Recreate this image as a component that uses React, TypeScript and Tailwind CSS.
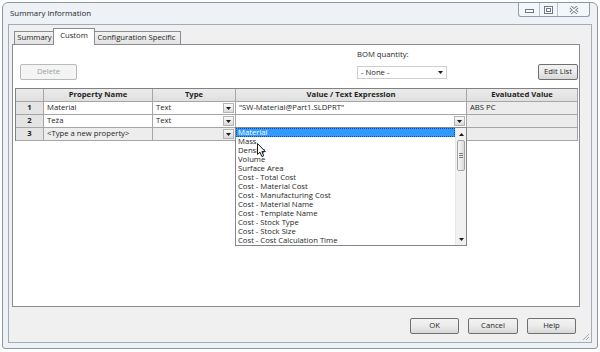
import React from "react";

const LIST_ITEMS = [
  "Material",
  "Mass",
  "Density",
  "Volume",
  "Surface Area",
  "Cost - Total Cost",
  "Cost - Material Cost",
  "Cost - Manufacturing Cost",
  "Cost - Material Name",
  "Cost - Template Name",
  "Cost - Stock Type",
  "Cost - Stock Size",
  "Cost - Cost Calculation Time",
];

function Tri({ up = false }: { up?: boolean }) {
  return (
    <svg width="5" height="3" viewBox="0 0 5 3">
      <path d={up ? "M0 3H5L2.5 0Z" : "M0 0H5L2.5 3Z"} fill="#1a1a1a" />
    </svg>
  );
}

function CellArrow() {
  return (
    <div className="ml-auto mr-px w-[11px] h-[10px] border border-[#b4b4b4] bg-linear-to-b from-[#fbfbfb] to-[#dadada] flex items-center justify-center">
      <Tri />
    </div>
  );
}

function Btn({ children, className = "", disabled = false }: { children: React.ReactNode; className?: string; disabled?: boolean }) {
  return (
    <button
      type="button"
      className={`h-[16px] rounded-[2px] border flex items-center justify-center ${
        disabled
          ? "border-[#b7bbbe] bg-[#f4f4f4] text-[#9c9c9c]"
          : "border-[#707070] bg-linear-to-b from-[#f3f3f3] via-[#ebebeb] to-[#d8d8d8] text-[#1e1e1e]"
      } ${className}`}
    >
      {children}
    </button>
  );
}

function CaptionButtons() {
  return (
    <div className="ml-auto mr-[7px] h-[14px] flex border border-t-0 border-[#8f9cab] rounded-b-[3px] bg-[#f4f7fa]">
      <div className="w-[21px] flex items-center justify-center border-r border-[#b6c0cb]">
        <svg width="9" height="6" viewBox="0 0 9 6">
          <rect x="0.5" y="2.5" width="8" height="3" fill="#fff" stroke="#6d7886" />
        </svg>
      </div>
      <div className="w-[18px] flex items-center justify-center border-r border-[#b6c0cb]">
        <svg width="9" height="8" viewBox="0 0 9 8">
          <rect x="0.5" y="0.5" width="8" height="7" fill="#fff" stroke="#6d7886" />
          <rect x="2.5" y="2.5" width="4" height="3" fill="none" stroke="#6d7886" />
        </svg>
      </div>
      <div className="w-[31px] flex items-center justify-center">
        <svg width="10" height="8" viewBox="0 0 10 8">
          <path d="M1.5 1L8.5 7M8.5 1L1.5 7" stroke="#6d7886" strokeWidth="3" />
          <path d="M1.5 1L8.5 7M8.5 1L1.5 7" stroke="#fff" strokeWidth="1.4" />
        </svg>
      </div>
    </div>
  );
}

function DropList() {
  return (
    <div className="absolute left-[219px] top-[38px] w-[232px] h-[119px] border border-[#828790] bg-white flex z-20">
      <div className="relative w-[219px] flex flex-col">
        {LIST_ITEMS.map((item, i) => (
          <div
            key={item}
            className={`h-[9px] leading-[9px] pl-[2px] whitespace-nowrap ${
              i === 0 ? "bg-[#3399ff] text-white outline outline-dotted outline-[#0b4f9c] -outline-offset-1" : ""
            }`}
          >
            {item}
          </div>
        ))}
        <svg className="absolute left-[21px] top-[15px]" width="10" height="15" viewBox="0 0 10 15">
          <path d="M0.5 0.5V11.5L3 9.2L4.9 13.6L6.7 12.8L4.9 8.6H8.3Z" fill="#fff" stroke="#000" strokeWidth="0.9" strokeLinejoin="round" />
        </svg>
      </div>
      <div className="w-[11px] flex flex-col bg-[#f1f1f1] border-l border-[#e6e6e6]">
        <div className="h-[12px] flex items-center justify-center">
          <Tri up />
        </div>
        <div className="mx-px h-[31px] border border-[#a3a3a3] rounded-[2px] bg-linear-to-r from-[#f6f6f6] to-[#dcdcdc] flex flex-col items-center justify-center gap-px">
          <div className="w-[4px] h-px bg-[#7c7c7c]" />
          <div className="w-[4px] h-px bg-[#7c7c7c]" />
          <div className="w-[4px] h-px bg-[#7c7c7c]" />
        </div>
        <div className="flex-1" />
        <div className="h-[11px] flex items-center justify-center">
          <Tri />
        </div>
      </div>
    </div>
  );
}

function PropertyTable() {
  const cell = "h-full border-r border-b border-[#a6a6a6] flex items-center";
  return (
    <div className="relative ml-[2px] w-[563px] border-l border-t border-[#828282]">
      <div className="flex h-[13px] font-bold bg-linear-to-b from-[#ececec] to-[#dedede]">
        <div className={`${cell} w-[28px]`} />
        <div className={`${cell} w-[109px] justify-center`}>Property Name</div>
        <div className={`${cell} w-[83px] justify-center`}>Type</div>
        <div className={`${cell} w-[231px] justify-center`}>Value / Text Expression</div>
        <div className={`${cell} w-[111px] justify-center`}>Evaluated Value</div>
      </div>
      <div className="flex h-[13px]">
        <div className={`${cell} w-[28px] justify-center font-bold bg-[#e4e4e4]`}>1</div>
        <div className={`${cell} w-[109px] pl-[3px] bg-white`}>Material</div>
        <div className={`${cell} w-[83px] pl-[3px] bg-white`}>
          Text
          <CellArrow />
        </div>
        <div className={`${cell} w-[231px] pl-[3px] bg-white`}>"SW-Material@Part1.SLDPRT"</div>
        <div className={`${cell} w-[111px] pl-[3px] bg-[#ececec]`}>ABS PC</div>
      </div>
      <div className="flex h-[13px]">
        <div className={`${cell} w-[28px] justify-center font-bold bg-[#e4e4e4]`}>2</div>
        <div className={`${cell} w-[109px] pl-[3px] bg-white`}>Teža</div>
        <div className={`${cell} w-[83px] pl-[3px] bg-white`}>
          Text
          <CellArrow />
        </div>
        <div className={`${cell} w-[231px] bg-white`}>
          <CellArrow />
        </div>
        <div className={`${cell} w-[111px] bg-[#ececec]`} />
      </div>
      <div className="flex h-[13px]">
        <div className={`${cell} w-[28px] justify-center font-bold bg-[#e4e4e4]`}>3</div>
        <div className={`${cell} w-[109px] pl-[3px] bg-[#ededed]`}>&lt;Type a new property&gt;</div>
        <div className={`${cell} w-[83px] bg-[#ededed]`}>
          <CellArrow />
        </div>
        <div className={`${cell} w-[231px] bg-[#ededed]`} />
        <div className={`${cell} w-[111px] bg-[#ececec]`} />
      </div>
      <DropList />
    </div>
  );
}

export default function App() {
  return (
    <div className="w-[600px] h-[352px] bg-white pt-[2px] pl-[2px] font-['Open_Sans',sans-serif] text-[7.7px] leading-none text-[#1e1e1e] select-none">
      <div className="w-[596px] h-[347px] border border-[#8e98a3] rounded-t-[6px] rounded-b-[3px] bg-[#eef2f6] flex flex-col">
        <div className="h-[21px] shrink-0 flex">
          <div className="pl-[7px] pt-[7px] text-[7.9px]">Summary Information</div>
          <CaptionButtons />
        </div>

        <div className="relative mx-[5px] mb-[5px] flex-1 border border-[#a3abb5] bg-[#f0f0f0] flex flex-col">
          <div className="relative z-10 h-[20px] -mb-px pl-[5px] pt-[3px] flex items-end">
            <div className="mb-px w-[41px] h-[13px] border border-b-0 border-[#898c95] bg-linear-to-b from-[#f2f2f2] to-[#e3e3e3] flex items-center justify-center">
              Summary
            </div>
            <div className="relative z-10 -mx-[2px] w-[42px] h-[17px] border border-b-0 border-[#898c95] bg-white flex items-center justify-center pb-[2px]">
              Custom
            </div>
            <div className="mb-px w-[88px] h-[13px] border border-b-0 border-l-0 border-[#898c95] bg-linear-to-b from-[#f2f2f2] to-[#e3e3e3] flex items-center justify-center">
              Configuration Specific
            </div>
          </div>

          <div className="ml-[3px] w-[568px] h-[263px] border border-[#898c95] bg-white flex flex-col">
            <div className="h-[43px] flex items-start">
              <Btn disabled className="ml-[7px] mt-[19px] w-[57px] h-[15px]">Delete</Btn>
              <div className="ml-[280px] mt-[5px] flex flex-col">
                <div className="h-[10px] flex items-center">BOM quantity:</div>
                <div className="mt-[6px] w-[90px] h-[13px] border border-[#cfcfcf] bg-white flex items-center pl-[3px]">
                  - None -
                  <span className="ml-auto mr-[3px] flex">
                    <Tri />
                  </span>
                </div>
              </div>
              <Btn className="ml-[91px] mt-[19px] w-[40px] h-[15px]">Edit List</Btn>
            </div>
            <PropertyTable />
          </div>

          <div className="mt-[11px] pr-[15px] flex justify-end gap-[9px]">
            <Btn className="w-[49px]">OK</Btn>
            <Btn className="w-[50px]">Cancel</Btn>
            <Btn className="w-[49px]">Help</Btn>
          </div>

          <svg className="absolute right-[1px] bottom-[1px]" width="9" height="9" viewBox="0 0 9 9">
            <path d="M8 2L2 8M8 5L5 8" stroke="#a0a7b0" strokeWidth="1" />
          </svg>
        </div>
      </div>
    </div>
  );
}
